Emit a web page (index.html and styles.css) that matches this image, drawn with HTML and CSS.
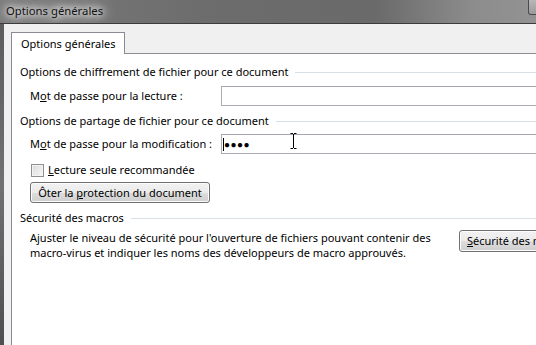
FILE: index.html
```html
<!DOCTYPE html>
<html lang="fr">
<head>
    <meta charset="UTF-8">
    <title>Options générales</title>
    <link rel="stylesheet" href="styles.css">
</head>
<body>
    <div class="window">
        <div class="titlebar">
            <span class="title">Options générales</span>
            <span class="caption-btn"></span>
        </div>
        <div class="frame">
            <div class="frame-edge"></div>
            <div class="client">
                <div class="tabs">
                    <div class="tab">Options générales</div>
                </div>
                <div class="panel">
                    <div class="group-title first">Options de chiffrement de fichier pour ce document</div>
                    <div class="field">
                        <label>M<u>o</u>t de passe pour la lecture :</label>
                        <div class="input"></div>
                    </div>

                    <div class="group-title">Options de partage de fichier pour ce document</div>
                    <div class="field field-2">
                        <label>M<u>o</u>t de passe pour la modification :</label>
                        <div class="input">
                            <span class="caret"></span><span class="dots">●●●●</span>
                            <svg class="ibeam" width="7" height="16" viewBox="0 0 7 16">
                                <path d="M0.5 0.5h2.5M4 0.5h2.5M3.5 1v14M0.5 15.5h2.5M4 15.5h2.5" stroke="#000" stroke-width="1" fill="none"/>
                            </svg>
                        </div>
                    </div>

                    <div class="check-row">
                        <span class="checkbox"></span>
                        <span><u>L</u>ecture seule recommandée</span>
                    </div>
                    <button class="btn btn-unprotect">Ôter la <u>p</u>rotection du document</button>

                    <div class="group-title">Sécurité des macros</div>
                    <div class="macro-row">
                        <p>Ajuster le niveau de sécurité pour l'ouverture de fichiers pouvant contenir des macro-virus et indiquer les noms des développeurs de macro approuvés.</p>
                        <button class="btn btn-macro"><u>S</u>écurité des macros...</button>
                    </div>
                </div>
            </div>
        </div>
    </div>
</body>
</html>
```

FILE: styles.css
```css
body {
    margin: 0;
    padding: 0;
    width: 536px;
    height: 345px;
    overflow: hidden;
    font-family: "Noto Sans", "Open Sans", sans-serif;
    font-size: 11px;
    color: #000000;
}
.window {
    display: flex;
    flex-direction: column;
    height: 345px;
}
/* Title bar */
.titlebar {
    height: 23px;
    flex: none;
    display: flex;
    align-items: center;
    justify-content: space-between;
    border-bottom: 1px solid #3c3c3c;
    background: linear-gradient(to right, #7a7a7a 0%, #6c6c6c 40%, #6a6a6a 70%, #8c8c8c 88%, #939393 100%);
    overflow: hidden;
}
.title {
    margin-left: 6px;
    padding: 0 0 1px;
    color: #111111;
    font-size: 11.3px;
    line-height: 22px;
    white-space: nowrap;
    text-shadow: 0 0 6px #ffffff, 0 0 10px #ffffff, 0 0 14px rgba(255, 255, 255, 0.9), 0 0 20px rgba(255, 255, 255, 0.8);
}
.caption-btn {
    align-self: flex-start;
    width: 20px;
    height: 14px;
    margin-right: -14px;
    border: 1px solid #4a4a4a;
    border-top: none;
    border-radius: 0 0 0 3px;
    background: linear-gradient(#b8b8b8, #9a9a9a);
}
/* Frame */
.frame {
    flex: 1;
    display: flex;
    min-height: 0;
}
.frame-edge {
    width: 4px;
    flex: none;
    background: linear-gradient(#5c5c5c, #707070 50%, #4e4e4e);
}
.client {
    flex: 1;
    display: flex;
    flex-direction: column;
    background-color: #f0f0f0;
    padding: 8px 0 0 7px;
    min-width: 0;
}
.tabs {
    display: flex;
    height: 21px;
    flex: none;
}
.tab {
    width: 114px;
    box-sizing: border-box;
    border: 1px solid #898c95;
    border-bottom: none;
    background-color: #ffffff;
    padding: 3px 0 0 9px;
    line-height: 16px;
    white-space: nowrap;
    margin-bottom: -1px;
    position: relative;
    z-index: 1;
}
.panel {
    flex: 1;
    background-color: #ffffff;
    border-top: 1px solid #898c95;
    border-left: 1px solid #898c95;
    padding: 0 0 0 8px;
    overflow: hidden;
}
.group-title {
    display: flex;
    align-items: center;
    gap: 7px;
    line-height: 16px;
    margin-top: 7px;
    white-space: nowrap;
}
.group-title.first {
    margin-top: 10px;
}
.group-title::after {
    content: "";
    flex: 1;
    height: 1px;
    background-color: #d5dfe5;
}
.field {
    display: flex;
    align-items: center;
    margin-top: 6px;
    padding-left: 10px;
}
.field-2 {
    margin-top: 5px;
}
.field label {
    width: 191px;
    flex: none;
    line-height: 16px;
    white-space: nowrap;
}
.input {
    width: 340px;
    height: 20px;
    flex: none;
    box-sizing: border-box;
    border: 1px solid #abadb3;
    border-top-color: #a3a6ae;
    background-color: #ffffff;
    display: flex;
    align-items: center;
    padding-left: 1px;
    position: relative;
}
.caret {
    width: 1px;
    height: 13px;
    background-color: #000000;
}
.dots {
    font-size: 10px;
    letter-spacing: 0.5px;
    line-height: 12px;
}
.ibeam {
    position: absolute;
    left: 68px;
    top: -2px;
}
.check-row {
    display: flex;
    align-items: center;
    gap: 4px;
    margin-top: 8px;
    padding-left: 11px;
    line-height: 16px;
    white-space: nowrap;
}
.checkbox {
    width: 13px;
    height: 13px;
    box-sizing: border-box;
    border: 1px solid #8e8f8f;
    background: linear-gradient(135deg, #dcdcdc, #f6f6f6);
    box-shadow: inset 0 0 0 1px #f4f4f4;
}
.btn {
    display: block;
    font-family: inherit;
    font-size: 11px;
    color: #000000;
    border: 1px solid #707070;
    border-radius: 3px;
    background: linear-gradient(#f2f2f2 0%, #ebebeb 50%, #dddddd 51%, #cfcfcf 100%);
    box-shadow: inset 0 0 0 1px #fcfcfc;
    padding: 0 6px;
    line-height: 16px;
    white-space: nowrap;
}
.btn-unprotect {
    margin: 4px 0 0 10px;
    width: 180px;
    height: 21px;
    padding: 0;
}
.macro-row {
    display: flex;
    align-items: flex-start;
    gap: 19px;
    margin-top: 4px;
    padding-left: 10px;
}
.macro-row p {
    margin: 0;
    width: 410px;
    flex: none;
    line-height: 15px;
}
.btn-macro {
    flex: none;
    height: 22px;
    margin-top: 0;
    padding: 0 7px;
    text-align: left;
}
```
